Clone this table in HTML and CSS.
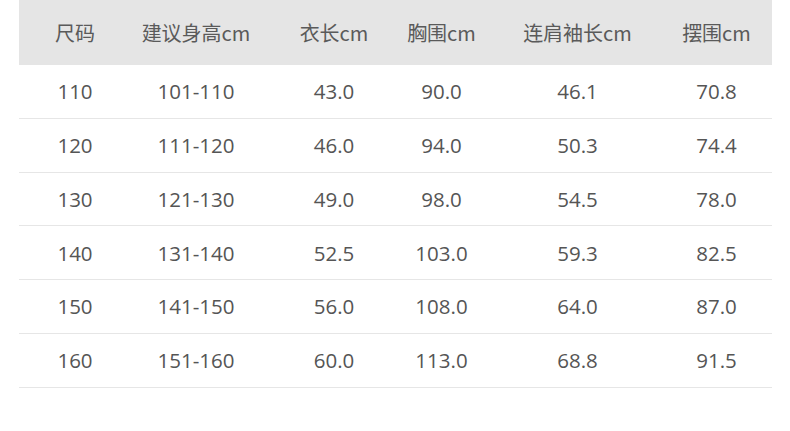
FILE: index.html
```html
<!DOCTYPE html>
<html lang="zh-CN">
<head>
<meta charset="utf-8">
<link rel="stylesheet" href="styles.css">
</head>
<body>
<div class="table">
  <div class="row head">
    <div class="c">尺码</div><div class="c">建议身高cm</div><div class="c">衣长cm</div><div class="c">胸围cm</div><div class="c">连肩袖长cm</div><div class="c last">摆围cm</div>
  </div>
  <div class="row"><div class="c">110</div><div class="c">101-110</div><div class="c">43.0</div><div class="c">90.0</div><div class="c">46.1</div><div class="c last">70.8</div></div>
  <div class="row"><div class="c">120</div><div class="c">111-120</div><div class="c">46.0</div><div class="c">94.0</div><div class="c">50.3</div><div class="c last">74.4</div></div>
  <div class="row"><div class="c">130</div><div class="c">121-130</div><div class="c">49.0</div><div class="c">98.0</div><div class="c">54.5</div><div class="c last">78.0</div></div>
  <div class="row"><div class="c">140</div><div class="c">131-140</div><div class="c">52.5</div><div class="c">103.0</div><div class="c">59.3</div><div class="c last">82.5</div></div>
  <div class="row"><div class="c">150</div><div class="c">141-150</div><div class="c">56.0</div><div class="c">108.0</div><div class="c">64.0</div><div class="c last">87.0</div></div>
  <div class="row"><div class="c">160</div><div class="c">151-160</div><div class="c">60.0</div><div class="c">113.0</div><div class="c">68.8</div><div class="c last">91.5</div></div>
</div>
</body>
</html>
```
FILE: styles.css
```css
html, body {
  margin: 0;
  padding: 0;
  background: #ffffff;
}
body {
  padding: 0 18px 0 19px;
  font-family: "Open Sans", "Noto Sans CJK SC", sans-serif;
  font-size: 20.5px;
  color: #555555;
}
.table {
  width: 753px;
}
.row {
  display: grid;
  grid-template-columns: 112px 130px 146px 69px 203px 93px;
  box-sizing: border-box;
  height: 53.75px;
  border-bottom: 1px solid #e6e6e6;
  align-items: center;
}
.row.head {
  height: 65px;
  background: #e5e5e5;
  border-bottom: none;
  font-family: "Noto Sans CJK SC", sans-serif;
  font-size: 20px;
  color: #5a5a5a;
}
.c {
  text-align: center;
  white-space: nowrap;
  display: flex;
  justify-content: center;
}
.c.last {
  padding-right: 18px;
}
```
